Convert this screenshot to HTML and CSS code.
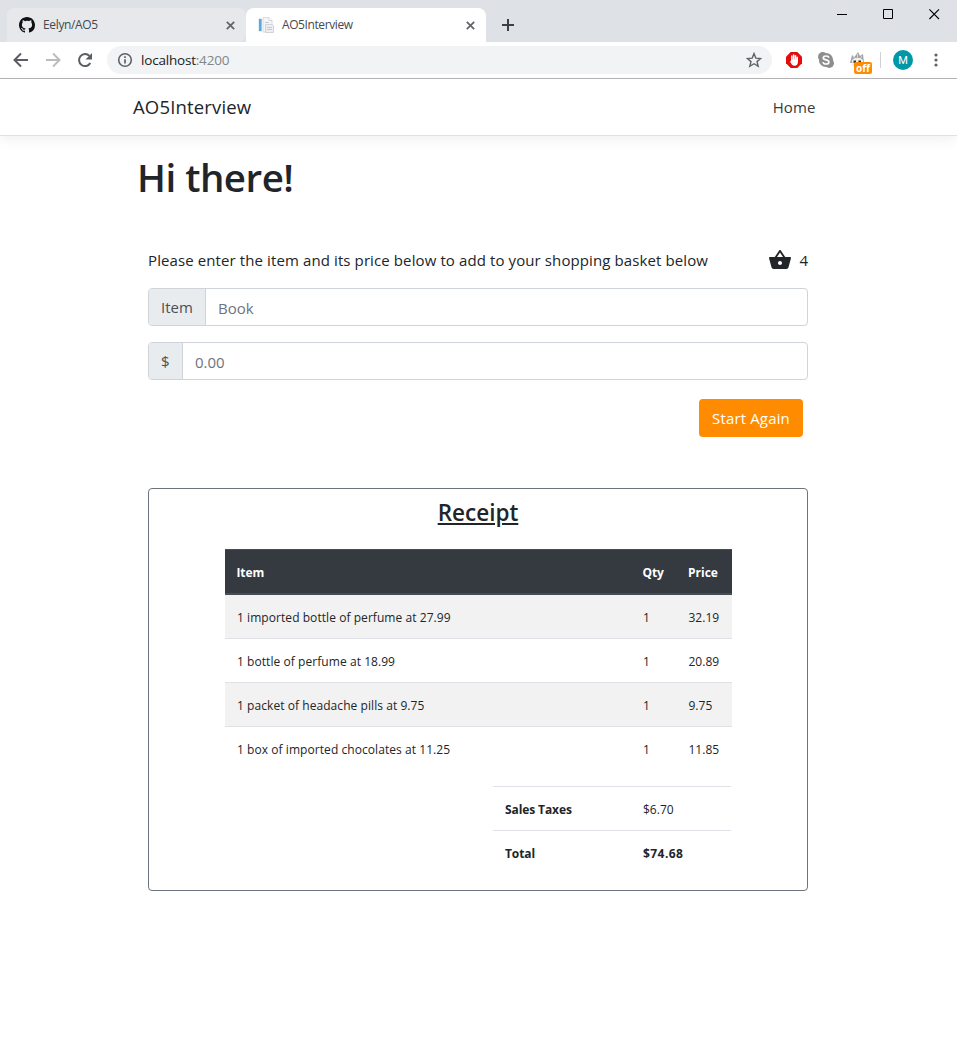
FILE: index.html
```
<!DOCTYPE html>
<html lang="en">
<head>
<meta charset="utf-8">
<title>AO5Interview</title>
<link rel="stylesheet" href="styles.css">
</head>
<body>
<div class="tabstrip">
  <div class="tab tab-idle">
    <svg class="favicon" width="16" height="16" viewBox="0 0 16 16"><path fill="#111" d="M8 0C3.58 0 0 3.58 0 8c0 3.54 2.29 6.53 5.47 7.59.4.07.55-.17.55-.38 0-.19-.01-.82-.01-1.49-2.01.37-2.53-.49-2.69-.94-.09-.23-.48-.94-.82-1.13-.28-.15-.68-.52-.01-.53.63-.01 1.08.58 1.23.82.72 1.21 1.87.87 2.33.66.07-.52.28-.87.51-1.07-1.78-.2-3.64-.89-3.64-3.95 0-.87.31-1.59.82-2.15-.08-.2-.36-1.02.08-2.12 0 0 .67-.21 2.2.82A7.6 7.6 0 0 1 8 3.86c.68 0 1.36.09 2 .27 1.53-1.04 2.2-.82 2.2-.82.44 1.1.16 1.92.08 2.12.51.56.82 1.27.82 2.15 0 3.07-1.87 3.75-3.65 3.95.29.25.54.73.54 1.48 0 1.07-.01 1.93-.01 2.2 0 .21.15.46.55.38A8.01 8.01 0 0 0 16 8c0-4.42-3.58-8-8-8z"/></svg>
    <span class="tab-title">Eelyn/AO5</span>
    <svg class="tab-close" width="9" height="9" viewBox="0 0 9 9"><path d="M.8.8l7.4 7.4M8.2.8L.8 8.2" stroke="#5f6368" stroke-width="1.7"/></svg>
  </div>
  <div class="tab tab-active">
    <svg class="favicon" width="16" height="16" viewBox="0 0 16 16"><path d="M5 .5h6l3 3V15H5z" fill="#f5f6f7" stroke="#d9dce0"/><path d="M.5 1.500h3.500v13H.5z" fill="#cfe3f0"/><path d="M1 2h2.500v12H1z" fill="#5aa9da"/><path d="M11 .5v3h3" fill="#fff" stroke="#d0d4d9"/><path d="M7.500 7.500h7l1 1v7h-8z" fill="#eceef1" stroke="#d0d3d9"/><path d="M9 10.500h5M9 12.500h5M7 5.500h4" stroke="#c5cad1"/></svg>
    <span class="tab-title">AO5Interview</span>
    <svg class="tab-close" width="9" height="9" viewBox="0 0 9 9"><path d="M.8.8l7.4 7.4M8.2.8L.8 8.2" stroke="#5f6368" stroke-width="1.7"/></svg>
  </div>
  <svg class="new-tab" width="12" height="12" viewBox="0 0 12 12"><path d="M6 0v12M0 6h12" stroke="#3c4043" stroke-width="2"/></svg>
  <div class="window-controls">
    <svg width="11" height="11" viewBox="0 0 11 11"><path d="M0 5.500h10" stroke="#000"/></svg>
    <svg width="11" height="11" viewBox="0 0 11 11"><path d="M.5.5h9v9H.5z" fill="none" stroke="#000"/></svg>
    <svg width="11" height="11" viewBox="0 0 11 11"><path d="M.4.4l9.600 9.600M10 .4L.4 10" stroke="#000" stroke-width="1.1"/></svg>
  </div>
</div>
<div class="toolbar">
  <div class="nav-icons">
    <svg width="16" height="16" viewBox="0 0 16 16"><path d="M15 8H2M8 1.500L1.500 8 8 14.500" fill="none" stroke="#5a5e63" stroke-width="2"/></svg>
    <svg width="16" height="16" viewBox="0 0 16 16"><path d="M1 8h13M8 1.500L14.500 8 8 14.500" fill="none" stroke="#babcbe" stroke-width="2"/></svg>
    <svg width="16" height="16" viewBox="0 0 16 16"><path d="M13.300 11A6 6 0 1 1 12.400 3.900" fill="none" stroke="#5a5e63" stroke-width="2"/><path d="M15 1v6.500H8.500z" fill="#5a5e63"/></svg>
  </div>
  <div class="address">
    <svg width="16" height="16" viewBox="0 0 16 16"><circle cx="8" cy="8" r="6.300" fill="none" stroke="#5f6368" stroke-width="1.600"/><path d="M8 7.200v4.300M8 4.300v1.700" stroke="#5f6368" stroke-width="1.700"/></svg>
    <span class="url">localhost<span class="port">:4200</span></span>
    <svg class="star" width="16" height="16" viewBox="0 0 16 16"><path d="M8 1.600l1.800 4.500 4.900.4L11 9.600l1.200 4.700L8 11.700l-4.200 2.600L5 9.600 1.300 6.500l4.900-.4z" fill="none" stroke="#5f6368" stroke-width="1.400"/></svg>
  </div>
  <div class="extensions">
    <svg width="16" height="16" viewBox="0 0 16 16"><path d="M4.700 0h6.600L16 4.700v6.600L11.300 16H4.700L0 11.300V4.700z" fill="#e40d0d"/><path d="M5.900 8V4M7.700 8V3M9.500 8V3.700M11.200 9V5.200" stroke="#fff" stroke-width="1.500" stroke-linecap="round"/><path d="M5.200 7.500h6.700V10c0 2.200-1.200 3.700-3.200 3.700-2.200 0-3.300-1.400-4.700-4.200l.8-.6z" fill="#fff"/></svg>
    <svg width="16" height="16" viewBox="0 0 16 16"><circle cx="4.700" cy="4.700" r="4.700" fill="#8e8e8e"/><circle cx="11.300" cy="11.300" r="4.700" fill="#8e8e8e"/><circle cx="8" cy="8" r="7.100" fill="#8e8e8e"/><path d="M11 5.600C10.500 4.400 9.500 4 8 4 6.500 4 5.300 4.600 5.300 5.900c0 2.600 5.600 1.400 5.600 4 0 1.300-1.200 2.100-2.800 2.100-1.800 0-2.900-.7-3.200-1.900" fill="none" stroke="#fff" stroke-width="1.700"/></svg>
    <div class="fox">
      <svg width="16" height="16" viewBox="0 0 16 16"><path d="M0 11L2 3l2.500 2L8 0l2 4 3-2 1 9z" fill="#a3a3a3"/><path d="M3 4l2 3M7.500 2v4M12 4l-2 3" stroke="#d5d5d5"/><path d="M2 8l3-2h5l3 2v6H2z" fill="#eee"/><path d="M3.500 8.500h2.500V11H3.500zM8.500 8.500H11V11H8.500z" fill="#333"/></svg>
      <span class="off">off</span>
    </div>
  </div>
  <span class="divider"></span>
  <span class="avatar">M</span>
  <svg class="kebab" width="4" height="14" viewBox="0 0 4 14"><g fill="#5f6368"><circle cx="2" cy="2" r="1.600"/><circle cx="2" cy="7" r="1.600"/><circle cx="2" cy="12" r="1.600"/></g></svg>
</div>

<header class="site-nav">
  <span class="brand">AO5Interview</span>
  <span class="home">Home</span>
</header>
<main class="content">
  <h1 class="greeting">Hi there!</h1>
  <div class="intro">
    <span class="prompt">Please enter the item and its price below to add to your shopping basket below</span>
    <span class="basket">
      <svg width="24" height="24" viewBox="0 0 24 24"><path fill="#212529" d="M17.210 9l-4.380-6.560c-.19-.28-.51-.42-.83-.42-.32 0-.64.14-.83.430L6.790 9H2c-.55 0-1 .45-1 1 0 .09.010.18.040.27l2.540 9.270c.23.84 1 1.460 1.920 1.460h13c.92 0 1.690-.62 1.930-1.460l2.540-9.270L23 10c0-.55-.45-1-1-1h-4.790zM9 9l3-4.400L15 9H9zm3 8c-1.100 0-2-.9-2-2s.9-2 2-2 2 .9 2 2-.9 2-2 2z"/></svg>
      <span>4</span>
    </span>
  </div>
  <div class="field"><span class="prefix prefix-item">Item</span><span class="value">Book</span></div>
  <div class="field"><span class="prefix prefix-price">$</span><span class="value">0.00</span></div>
  <div class="actions"><button class="restart">Start Again</button></div>
  <section class="receipt">
    <h2 class="receipt-title">Receipt</h2>
    <div class="items">
      <div class="row head"><span>Item</span><span>Qty</span><span>Price</span></div>
      <div class="row odd"><span>1 imported bottle of perfume at 27.99</span><span>1</span><span>32.19</span></div>
      <div class="row"><span>1 bottle of perfume at 18.99</span><span>1</span><span>20.89</span></div>
      <div class="row odd"><span>1 packet of headache pills at 9.75</span><span>1</span><span>9.75</span></div>
      <div class="row"><span>1 box of imported chocolates at 11.25</span><span>1</span><span>11.85</span></div>
    </div>
    <div class="totals">
      <div class="total-row"><b>Sales Taxes</b><span>$6.70</span></div>
      <div class="total-row"><b>Total</b><b class="sum">$74.68</b></div>
    </div>
  </section>
</main>
</body>
</html>
```
FILE: styles.css
```
* { box-sizing: border-box; }
body {
  margin: 0;
  min-height: 1037px;
  background: #fff;
  color: #212529;
  font: 15px/24px "Open Sans", "Noto Sans", sans-serif;
}
svg { display: block; flex: none; }
span, b { white-space: nowrap; }

.tabstrip { height: 42px; background: #dee1e6; display: flex; align-items: flex-start; padding: 8px 0 0 7px; }
.tab { height: 34px; display: flex; align-items: center; padding: 0 11px 0 12px; }
.tab-idle { width: 239px; background: #e6e8ec; border-radius: 8px 8px 8px 0; }
.tab-active { width: 240px; background: #fff; border-radius: 8px 8px 0 0; }
.tab-title { flex: 1; margin-left: 8px; font-size: 12px; line-height: 16px; color: #45494d; letter-spacing: -0.35px; }
.tab-active .tab-title { letter-spacing: -0.4px; }
.tab-active .tab-close { margin-right: 0; }
.new-tab { margin: 11px 0 0 16px; }
.window-controls { margin: 1px 17px 0 auto; display: flex; gap: 35px; }

.toolbar { height: 37px; border-bottom: 1px solid #b6b4b6; display: flex; align-items: center; padding-left: 13px; }
.nav-icons { display: flex; gap: 16px; margin-right: 14px; }
.address { width: 665px; height: 28px; border-radius: 14px; background: #f1f3f4; display: flex; align-items: center; padding: 0 10px; }
.url { margin-left: 8px; font-size: 13.5px; color: #202124; letter-spacing: -0.2px; }
.port { color: #80868b; }
.star { margin-left: auto; }
.extensions { display: flex; gap: 16px; margin-left: 14px; }
.fox { position: relative; }
.off { position: absolute; left: 4px; top: 10px; width: 18px; height: 12px; border-radius: 2px; background: #ff8c00; color: #fff; font-size: 10px; line-height: 12px; font-weight: 700; text-align: center; }
.divider { width: 1px; height: 16px; margin-left: 14px; background: #cfd1d4; }
.avatar { width: 20px; height: 20px; margin-left: 12px; border-radius: 50%; background: #0097a7; color: #fff; font: 11px/21px Roboto, sans-serif; text-align: center; }
.kebab { margin-left: 20.5px; }

.site-nav { height: 57px; padding: 0 141.5px 1px 133px; display: flex; align-items: center; justify-content: space-between; border-bottom: 1px solid #dee2e6; box-shadow: 0 4px 12px rgba(0, 0, 0, .06); }
.brand { font-size: 18.5px; letter-spacing: .16px; padding-top: 1px; }
.home { color: #343a40; letter-spacing: .1px; }

.content { width: 660px; margin-left: 148px; }
.greeting { margin: 17px 0 0 -11px; font-size: 38.5px; line-height: 48px; font-weight: 600; letter-spacing: -.5px; }
.intro { margin-top: 47px; height: 24px; display: flex; justify-content: space-between; align-items: center; }
.prompt { letter-spacing: .105px; }
.basket { display: flex; gap: 7.5px; align-items: center; }
.field { height: 38px; margin-top: 16px; border: 1px solid #ced4da; border-radius: 4px; display: flex; align-items: stretch; line-height: 37px; }
.prefix { background: #e9ecef; border-right: 1px solid #ced4da; color: #495057; padding-left: 12px; border-radius: 3px 0 0 3px; }
.prefix-item { width: 57px; }
.prefix-price { width: 34px; }
.value { padding: 1px 0 0 12px; color: #6c757d; }
.actions { display: flex; justify-content: flex-end; padding: 19px 5px 0 0; }
.restart { width: 104px; height: 38px; border: 0; border-radius: 4px; background: #ff8c00; color: #fff; font: inherit; letter-spacing: .15px; padding: 0; }

.receipt { height: 403px; margin-top: 51px; border: 1px solid #6c757d; border-radius: 4px; padding: 8px 76px 0; }
.receipt-title { margin: 0; height: 52px; font-size: 22.5px; line-height: 32px; font-weight: 600; text-align: center; text-decoration: underline; text-decoration-thickness: 2px; text-underline-offset: 2px; }
.items { width: 507px; font-size: 12px; letter-spacing: .06px; }
.row { display: grid; grid-template-columns: 394px 46px 43px; height: 44px; padding: 2px 12px 0; align-items: center; border-top: 1px solid #dee2e6; }
.row > span:nth-child(2) { padding-left: 12px; }
.row > span:nth-child(3) { padding-left: 11.5px; letter-spacing: 0; }
.head { height: 46px; padding-left: 11.5px; background: #343a40; color: #fff; font-weight: 700; letter-spacing: -.1px; border-top: 1px solid #454d55; border-bottom: 2px solid #454d55; }
.odd { background: #f2f2f2; }
.head + .row { height: 43px; border-top: 0; }
.totals { width: 238px; margin: 16px 0 0 268px; font-size: 12px; }
.total-row { height: 44px; padding: 2px 0 0 12px; display: grid; grid-template-columns: 138px 88px; align-items: center; border-top: 1px solid #dee2e6; }
.total-row b { letter-spacing: -.1px; }
.total-row .sum { letter-spacing: .45px; }
```
